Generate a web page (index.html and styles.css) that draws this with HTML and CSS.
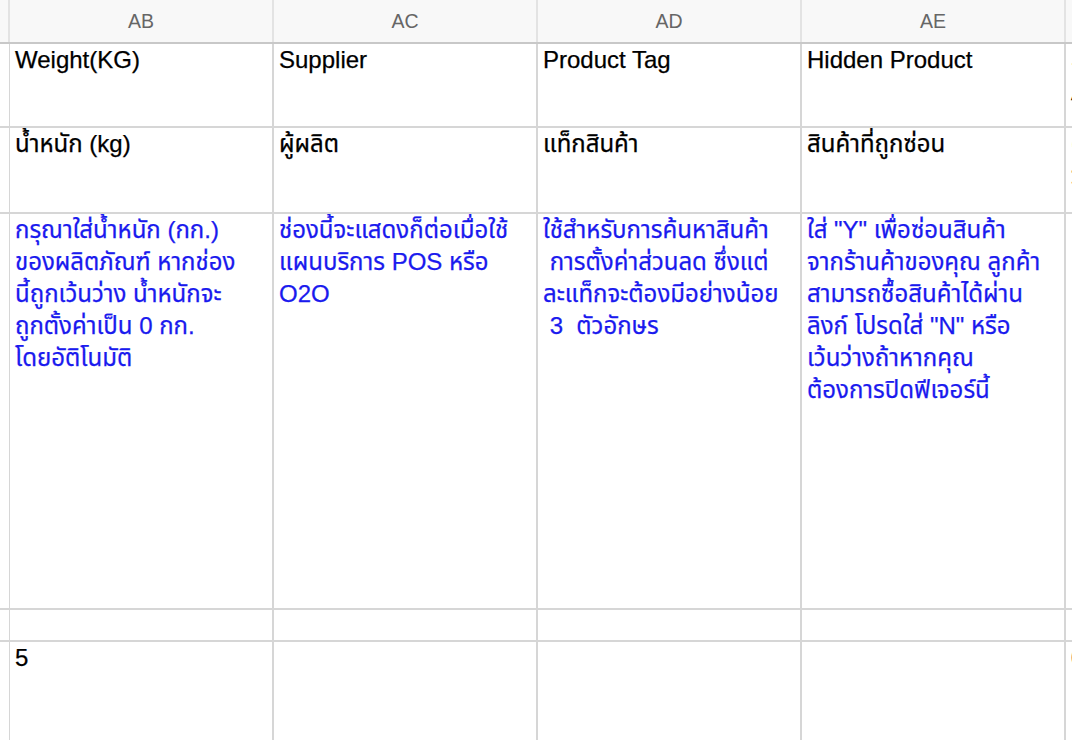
FILE: index.html
```html
<!DOCTYPE html>
<html lang="th">
<head>
<meta charset="utf-8">
<title>Sheet</title>
<link rel="stylesheet" href="styles.css">
</head>
<body>
<div class="sheet">
  <div class="col-head">
    <div class="hcell"></div>
    <div class="hcell">AB</div>
    <div class="hcell">AC</div>
    <div class="hcell">AD</div>
    <div class="hcell">AE</div>
    <div class="hcell"></div>
  </div>
  <div class="grid">
    <div class="cell"></div>
    <div class="cell">Weight(KG)</div>
    <div class="cell">Supplier</div>
    <div class="cell">Product Tag</div>
    <div class="cell">Hidden Product</div>
    <div class="cell">Set<br>Available</div>

    <div class="cell"></div>
    <div class="cell">น้ำหนัก (kg)</div>
    <div class="cell">ผู้ผลิต</div>
    <div class="cell">แท็กสินค้า</div>
    <div class="cell">สินค้าที่ถูกซ่อน</div>
    <div class="cell">ตั้งค่า<br>ว่าพร้อมขาย</div>

    <div class="cell"></div>
    <div class="cell note">กรุณาใส่น้ำหนัก (กก.)<br>ของผลิตภัณฑ์ หากช่อง<br>นี้ถูกเว้นว่าง น้ำหนักจะ<br>ถูกตั้งค่าเป็น 0 กก.<br>โดยอัติโนมัติ</div>
    <div class="cell note">ช่องนี้จะแสดงก็ต่อเมื่อใช้<br>แผนบริการ POS หรือ<br>O2O</div>
    <div class="cell note">ใช้สำหรับการค้นหาสินค้า<br>&nbsp;การตั้งค่าส่วนลด ซึ่งแต่<br>ละแท็กจะต้องมีอย่างน้อย<br>&nbsp;3 &nbsp;ตัวอักษร</div>
    <div class="cell note">ใส่ "Y" เพื่อซ่อนสินค้า<br>จากร้านค้าของคุณ ลูกค้า<br>สามารถซื้อสินค้าได้ผ่าน<br>ลิงก์ โปรดใส่ "N" หรือ<br>เว้นว่างถ้าหากคุณ<br>ต้องการปิดฟีเจอร์นี้</div>
    <div class="cell note"></div>

    <div class="cell"></div>
    <div class="cell"></div>
    <div class="cell"></div>
    <div class="cell"></div>
    <div class="cell"></div>
    <div class="cell"></div>

    <div class="cell"></div>
    <div class="cell">5</div>
    <div class="cell"></div>
    <div class="cell"></div>
    <div class="cell"></div>
    <div class="cell">0</div>
  </div>
</div>
</body>
</html>
```

FILE: styles.css
```css
html, body {
  margin: 0;
  padding: 0;
  background: #ffffff;
  overflow: hidden;
}

.sheet {
  width: 1072px;
  height: 740px;
  overflow: hidden;
  font-family: "Liberation Sans", Arial, "Noto Sans Thai", "Loma", "Garuda", sans-serif;
}

.col-head {
  display: grid;
  grid-template-columns: 8px 262px 262px 262px 262px 1fr;
  column-gap: 2px;
  height: 42px;
  background: #e3e3e3;
  border-bottom: 2px solid #c8c8c8;
}

.hcell {
  background: #f8f8f8;
  color: #666666;
  font-size: 19.5px;
  display: flex;
  align-items: center;
  justify-content: center;
  padding-top: 1px;
}

.grid {
  display: grid;
  grid-template-columns: 8px 262px 262px 262px 262px 1fr;
  grid-template-rows: 82px 84px 394px 30px 1fr;
  column-gap: 2px;
  row-gap: 2px;
  height: 696px;
  background: #d6d6d6;
}

.cell {
  background: #ffffff;
  color: #000000;
  font-size: 24px;
  line-height: 32px;
  padding: 0 4px 0 5px;
  overflow: hidden;
  white-space: nowrap;
  -webkit-text-stroke: 0.25px currentColor;
}

.note {
  color: #1a1aee;
  line-height: 32px;
}
```
